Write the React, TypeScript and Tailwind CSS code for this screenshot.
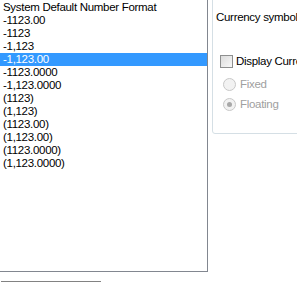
import React from 'react';

const formats = [
  'System Default Number Format',
  '-1123.00',
  '-1123',
  '-1,123',
  '-1,123.00',
  '-1123.0000',
  '-1,123.0000',
  '(1123)',
  '(1,123)',
  '(1123.00)',
  '(1,123.00)',
  '(1123.0000)',
  '(1,123.0000)',
];

const Radio = ({ label, checked }: { label: string; checked?: boolean }) => (
  <div className="flex items-center h-[20px] pl-[10px] text-[#a0a0a0]">
    <span className="w-[13px] h-[13px] rounded-full border border-[#c8c8c8] bg-[#f2f2f2] flex items-center justify-center">
      {checked && <span className="w-[5px] h-[5px] rounded-full bg-[#a8a8a8]" />}
    </span>
    <span className="ml-[4px]">{label}</span>
  </div>
);

export default function App() {
  const selected = 4;
  return (
    <div
      className="w-[297px] h-[282px] overflow-hidden bg-white flex text-[11.5px] leading-[13px] tracking-[-0.3px] text-black"
      style={{ fontFamily: '"Liberation Sans", Arial, sans-serif' }}
    >
      <div className="flex flex-col w-[208px] shrink-0">
        <div className="h-[272px] border-r border-b border-[#828790] pt-[1px]">
          {formats.map((f, i) => (
            <div
              key={f}
              className={`h-[13px] pl-[3px] whitespace-nowrap ${i === selected ? 'bg-[#3399ff] text-white' : ''}`}
            >
              {f}
            </div>
          ))}
        </div>
        <div className="mt-[9px] ml-[1px] w-[100px] border-t border-[#828282]" />
      </div>
      <div className="ml-[4px] -mt-[4px] h-[138px] w-[120px] shrink-0 border border-[#d5dfe5] rounded-[3px]">
        <div className="pl-[3px] pt-[14px] whitespace-nowrap">Currency symbol</div>
        <div className="mt-[30px] flex items-center h-[14px] pl-[7px] whitespace-nowrap">
          <span className="w-[13px] h-[13px] border border-[#8e8f8f] bg-gradient-to-br from-[#dcdcdc] to-[#f8f8f8]" />
          <span className="ml-[3px]">Display Currency</span>
        </div>
        <div className="mt-[6px]">
          <Radio label="Fixed" />
          <Radio label="Floating" checked />
        </div>
      </div>
    </div>
  );
}
